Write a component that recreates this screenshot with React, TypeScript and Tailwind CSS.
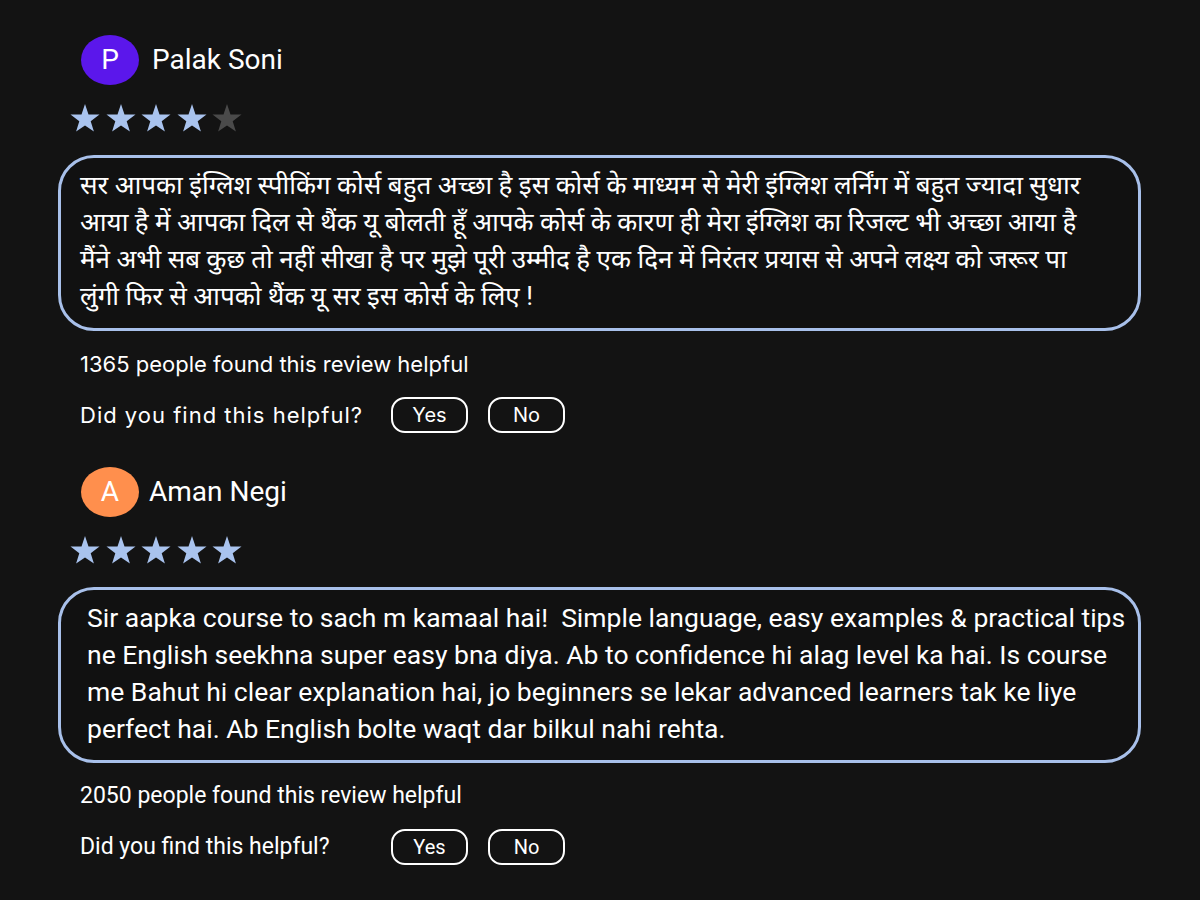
import React from 'react';

interface Review {
    initial: string;
    name: string;
    avatarClass: string;
    nameGap: string;
    rating: number;
    lines: string[];
    textClass: string;
    helpful: number;
    font: string;
    askClass: string;
}

const reviews: Review[] = [
    {
        initial: 'P',
        name: 'Palak Soni',
        avatarClass: 'bg-[#5b17eb]',
        nameGap: 'ml-[13px]',
        rating: 4,
        lines: [
            'सर आपका इंग्लिश स्पीकिंग कोर्स बहुत अच्छा है इस कोर्स के माध्यम से मेरी इंग्लिश लर्निंग में बहुत ज्यादा सुधार',
            'आया है में आपका दिल से थैंक यू बोलती हूँ आपके कोर्स के कारण ही मेरा इंग्लिश का रिजल्ट भी अच्छा आया है',
            'मैंने अभी सब कुछ तो नहीं सीखा है पर मुझे पूरी उम्मीद है एक दिन में निरंतर प्रयास से अपने लक्ष्य को जरूर पा',
            'लुंगी फिर से आपको थैंक यू सर इस कोर्स के लिए !',
        ],
        textClass: 'pl-[19px] text-[26px]',
        helpful: 1365,
        font: "font-['Inter','Roboto',sans-serif] text-[22px]",
        askClass: 'tracking-[1px]',
    },
    {
        initial: 'A',
        name: 'Aman Negi',
        avatarClass: 'bg-[#ff8f4d]',
        nameGap: 'ml-[10px]',
        rating: 5,
        lines: [
            'Sir aapka course to sach m kamaal hai!  Simple language, easy examples & practical tips',
            'ne English seekhna super easy bna diya. Ab to confidence hi alag level ka hai. Is course',
            'me Bahut hi clear explanation hai, jo beginners se lekar advanced learners tak ke liye',
            'perfect hai. Ab English bolte waqt dar bilkul nahi rehta.',
        ],
        textClass: 'pl-[26px] text-[26.5px]',
        helpful: 2050,
        font: "font-['Roboto',sans-serif] text-[23px]",
        askClass: '',
    },
];

const Star: React.FC<{ filled: boolean }> = ({ filled }) => (
    <svg width="30" height="28" viewBox="0 0 30 28" className={filled ? 'text-[#a9c3ee]' : 'text-[#4a4a4a]'}>
        <polygon
            fill="currentColor"
            points="15,0 18.5,10.4 29.5,10.6 20.7,17.2 23.9,27.6 15,21.4 6.1,27.6 9.3,17.2 0.5,10.6 11.5,10.4"
        />
    </svg>
);

const ReviewCard: React.FC<{ review: Review }> = ({ review }) => (
    <div className="flex flex-col">
        <div className="flex flex-row items-center ml-[23px] h-[50px]">
            <div className={`w-[58px] h-[50px] rounded-[50%] flex justify-center items-center text-white text-[28px] ${review.avatarClass}`}>
                {review.initial}
            </div>
            <span className={`text-white text-[28px] leading-none ${review.nameGap}`}>{review.name}</span>
        </div>
        <div className="flex flex-row gap-[5.5px] ml-[12px] mt-[19px]">
            {[1, 2, 3, 4, 5].map((i) => (
                <Star key={i} filled={i <= review.rating} />
            ))}
        </div>
        <div className="mt-[23px] w-[1083px] h-[176px] border-[3px] border-[#a8c0ea] rounded-[36px] bg-[#111111] pt-[9px] text-white leading-[37px]">
            {review.lines.map((line, i) => (
                <div key={i} className={`whitespace-pre ${review.textClass}`}>
                    {line}
                </div>
            ))}
        </div>
        <div className={`ml-[22px] mt-[20px] text-white leading-[26px] ${review.font}`}>
            {review.helpful} people found this review helpful
        </div>
        <div className={`ml-[22px] mt-[20px] flex flex-row items-center text-white ${review.font}`}>
            <span className={`w-[311px] ${review.askClass}`}>Did you find this helpful?</span>
            <button className="w-[77px] h-[36px] border-2 border-white rounded-[14px] text-white text-[20px]">Yes</button>
            <button className="ml-[20px] w-[77px] h-[36px] border-2 border-white rounded-[14px] text-white text-[20px]">No</button>
        </div>
    </div>
);

export default function App() {
    return (
        <div className="w-[1200px] h-[900px] bg-[#131313] pl-[58px] pt-[35px] font-['Roboto','Noto_Sans',sans-serif] flex flex-col gap-[34px]">
            {reviews.map((r) => (
                <ReviewCard key={r.name} review={r} />
            ))}
        </div>
    );
}
